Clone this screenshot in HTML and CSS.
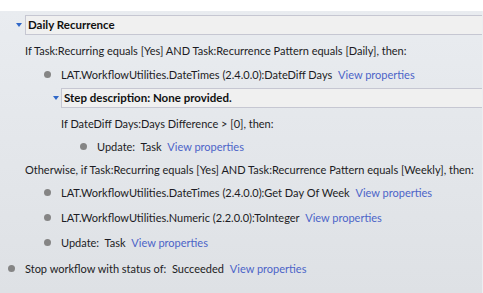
FILE: index.html
```html
<!DOCTYPE html>
<html lang="en">
<head>
  <meta charset="UTF-8">
  <title>Workflow steps</title>
  <link rel="stylesheet" href="styles.css">
</head>
<body>
  <div class="topbar"></div>
  <div class="panel">
    <div class="sec-head">
      <span class="caret-cell"><span class="caret"></span></span>
      <div class="sec-title">Daily Recurrence</div>
    </div>

    <div class="row i0 first">If Task:Recurring equals [Yes] AND Task:Recurrence Pattern equals [Daily], then:</div>
    <div class="row b1 gap1"><span class="dot"></span>LAT.WorkflowUtilities.DateTimes (2.4.0.0):DateDiff Days <a class="link">View properties</a></div>

    <div class="step-head">
      <span class="caret-cell step-caret"><span class="caret"></span></span>
      <div class="sec-title">Step description: None provided.</div>
    </div>
    <div class="row i1 first">If DateDiff Days:Days Difference &gt; [0], then:</div>
    <div class="row b2"><span class="dot"></span>Update:&nbsp; Task <a class="link">View properties</a></div>

    <div class="row i0">Otherwise, if Task:Recurring equals [Yes] AND Task:Recurrence Pattern equals [Weekly], then:</div>
    <div class="row b1"><span class="dot"></span>LAT.WorkflowUtilities.DateTimes (2.4.0.0):Get Day Of Week <a class="link">View properties</a></div>
    <div class="row b1 gap2"><span class="dot"></span>LAT.WorkflowUtilities.Numeric (2.2.0.0):ToInteger <a class="link">View properties</a></div>
    <div class="row b1 gap2"><span class="dot"></span>Update:&nbsp; Task <a class="link">View properties</a></div>

    <div class="row b0 gap3"><span class="dot"></span>Stop workflow with status of:&nbsp; Succeeded <a class="link">View properties</a></div>
  </div>
</body>
</html>
```

FILE: styles.css
```css
/* Global */
*, *::before, *::after { box-sizing: border-box; }
html, body { margin: 0; height: 100%; }
body {
  font-family: "Lato", "Liberation Sans", sans-serif;
  font-size: 11px;
  color: #1c1c24;
  overflow: hidden;
}

.topbar { height: 11px; background: #fff; }

.panel {
  height: calc(100% - 11px);
  padding-top: 4px;
  background: linear-gradient(#e9ecf0, #dee1e5);
  border-right: 1px solid #eceef1;
}

/* Collapsible headers */
.sec-head,
.step-head {
  display: flex;
  align-items: center;
  height: 20px;
}
.caret-cell {
  width: 25px;
  height: 100%;
  display: flex;
  align-items: center;
  padding-left: 16px;
}
.step-head .caret-cell { width: 61px; padding-left: 53px; }
.caret {
  width: 0;
  height: 0;
  border-left: 3.5px solid transparent;
  border-right: 3.5px solid transparent;
  border-top: 4px solid #2f67c8;
}
.sec-title {
  flex: 1;
  height: 20px;
  line-height: 18px;
  padding-left: 2px;
  background: #f0f0f0;
  border: 1px solid #c6c7d2;
  border-right: none;
  font-size: 11.5px;
  font-weight: bold;
  color: #111;
}
.step-head { margin-top: 2px; }

/* Rows */
.row {
  display: flex;
  align-items: center;
  height: 23px;
  white-space: pre;
}
.row.first { margin-top: 4px; }
.row.gap1 { margin-top: 1px; }
.row.gap2 { margin-top: 2px; }
.row.gap3 { margin-top: 3px; }

.i0 { padding-left: 25px; }
.i1 { padding-left: 61px; }
.b0 { padding-left: 8px; }
.b1 { padding-left: 44px; }
.b2 { padding-left: 80px; }

.dot {
  width: 7px;
  height: 7px;
  border-radius: 50%;
  background: #858585;
  margin-right: 10px;
}

.link {
  color: #4c64c8;
  margin-left: 3px;
  cursor: pointer;
}
```
